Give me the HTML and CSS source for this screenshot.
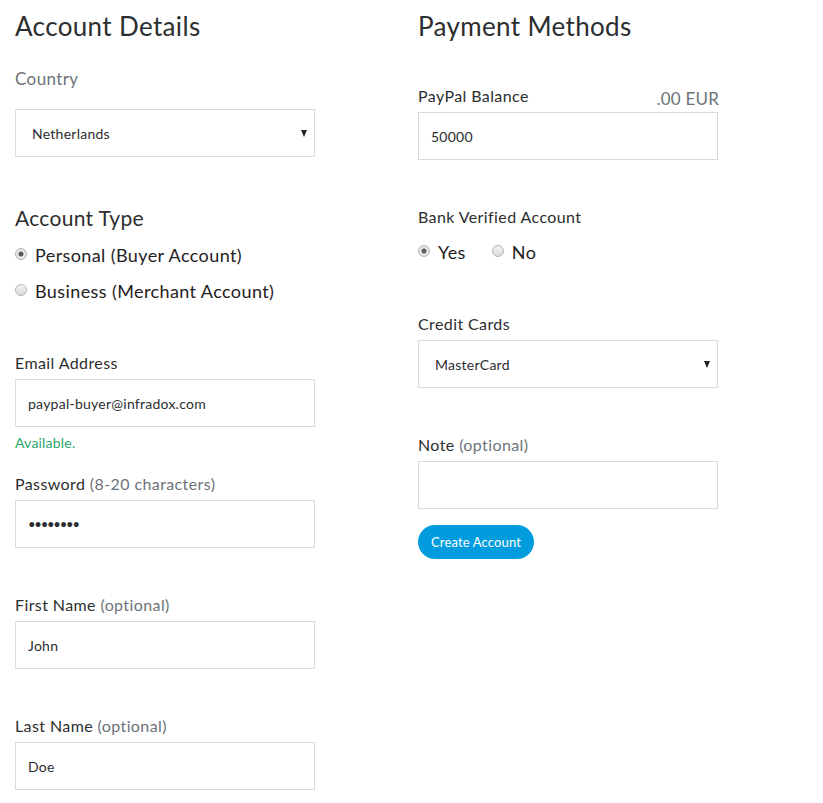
FILE: index.html
```html
<!DOCTYPE html>
<html lang="en">
<head>
<meta charset="utf-8">
<title>Create Sandbox Account</title>
<link rel="stylesheet" href="styles.css">
</head>
<body>
<div class="page">
  <section class="col">
    <h1 class="title">Account Details</h1>
    <label class="label-lg country-label">Country</label>
    <div class="select-wrap">
      <select class="field select">
        <option>Netherlands</option>
      </select>
    </div>

    <h2 class="subtitle">Account Type</h2>
    <div class="radio-list">
      <label class="radio-row"><input type="radio" name="type" class="radio" checked> Personal (Buyer Account)</label>
      <label class="radio-row"><input type="radio" name="type" class="radio"> Business (Merchant Account)</label>
    </div>

    <label class="label email-label">Email Address</label>
    <input class="field" type="text" value="paypal-buyer@infradox.com">
    <div class="hint">Available.</div>

    <label class="label pw-label">Password <span class="muted">(8-20 characters)</span></label>
    <input class="field pw" type="password" value="12345678">

    <label class="label gap-label">First Name <span class="muted">(optional)</span></label>
    <input class="field" type="text" value="John">

    <label class="label gap-label">Last Name <span class="muted">(optional)</span></label>
    <input class="field" type="text" value="Doe">
  </section>

  <section class="col">
    <h1 class="title">Payment Methods</h1>
    <div class="balance-row">
      <label class="label">PayPal Balance</label>
      <span class="currency">.00 EUR</span>
    </div>
    <input class="field" type="text" value="50000">

    <label class="label gap-label">Bank Verified Account</label>
    <div class="radio-inline">
      <label class="radio-row"><input type="radio" name="bank" class="radio" checked> Yes</label>
      <label class="radio-row"><input type="radio" name="bank" class="radio"> No</label>
    </div>

    <label class="label cc-label">Credit Cards</label>
    <div class="select-wrap">
      <select class="field select">
        <option>MasterCard</option>
      </select>
    </div>

    <label class="label gap-label">Note <span class="muted">(optional)</span></label>
    <input class="field" type="text" value="">

    <button class="btn" type="button">Create Account</button>
  </section>
</div>
</body>
</html>
```

FILE: styles.css
```css
* { box-sizing: border-box; }

body {
  margin: 0;
  background: #fff;
  color: #2c2e2f;
  font-family: Lato, "Open Sans", "Liberation Sans", sans-serif;
}

.page {
  display: grid;
  grid-template-columns: 300px 300px;
  column-gap: 103px;
  padding: 10px 0 0 15px;
}

.col {
  display: flex;
  flex-direction: column;
  align-items: stretch;
}

.title {
  margin: 0;
  font-size: 26px;
  line-height: 32px;
  font-weight: 400;
  letter-spacing: 0.35px;
  color: #2c2e2f;
}

.subtitle {
  margin: 47px 0 0;
  font-size: 21px;
  line-height: 28px;
  font-weight: 400;
  letter-spacing: 0.3px;
}

.label {
  display: block;
  font-size: 16px;
  line-height: 20px;
  letter-spacing: 0.4px;
  margin-bottom: 6px;
}

.label-lg {
  display: block;
  font-size: 17px;
  line-height: 22px;
  letter-spacing: 0.4px;
  color: #6c7378;
}

.country-label { margin-top: 26px; margin-bottom: 19px; }
.email-label { margin-top: 50px; }
.pw-label { margin-top: 22px; }
.gap-label { margin-top: 47px; }
.cc-label { margin-top: 50px; }

.muted { color: #6c7378; }

.field {
  display: block;
  width: 100%;
  height: 48px;
  border: 1px solid #dbdbdb;
  border-radius: 0;
  background: #fff;
  padding: 0 12px;
  font-family: inherit;
  font-size: 14px;
  letter-spacing: 0.25px;
  color: #2c2e2f;
  outline: none;
}

.pw {
  font-size: 13px;
  letter-spacing: -1.2px;
}

.select-wrap {
  position: relative;
}

.select-wrap::after {
  content: "";
  position: absolute;
  right: 8px;
  top: 21px;
  border-left: 3.5px solid transparent;
  border-right: 3.5px solid transparent;
  border-top: 7px solid #222;
  pointer-events: none;
}

.select {
  appearance: none;
  -webkit-appearance: none;
  padding: 0 16px;
}

.radio-list {
  display: flex;
  flex-direction: column;
  gap: 12px;
  margin-top: 11px;
}

.radio-inline {
  display: flex;
  gap: 26px;
  margin-top: 7px;
}

.radio-row {
  display: flex;
  align-items: center;
  gap: 8px;
  font-size: 18px;
  line-height: 24px;
  letter-spacing: 0.4px;
  color: #1f2123;
}

.radio {
  appearance: none;
  -webkit-appearance: none;
  margin: 0;
  width: 12px;
  height: 12px;
  flex: none;
  border-radius: 50%;
  border: 1px solid #b4b4b4;
  background: linear-gradient(#f2f2f2, #dcdcdc);
  position: relative;
  top: -1px;
}

.radio:checked {
  background: radial-gradient(circle, #5a5a5a 0 2.2px, #e6e6e6 2.8px);
}

.hint {
  margin-top: 7px;
  font-size: 14px;
  line-height: 18px;
  letter-spacing: 0.2px;
  color: #2ba56f;
}

.balance-row {
  display: flex;
  justify-content: space-between;
  align-items: flex-end;
  margin-top: 44px;
  margin-right: -1px;
  margin-bottom: 6px;
}

.balance-row .label { margin: 0; }

.currency {
  font-size: 17px;
  line-height: 20px;
  letter-spacing: 0.2px;
  color: #6c7378;
  position: relative;
  top: 3px;
}

.btn {
  align-self: flex-start;
  margin-top: 16px;
  height: 34px;
  padding: 0 13px;
  border: none;
  border-radius: 17px;
  background: #009cde;
  color: #fff;
  font-family: inherit;
  font-size: 13px;
  letter-spacing: 0.15px;
  cursor: pointer;
}
```
